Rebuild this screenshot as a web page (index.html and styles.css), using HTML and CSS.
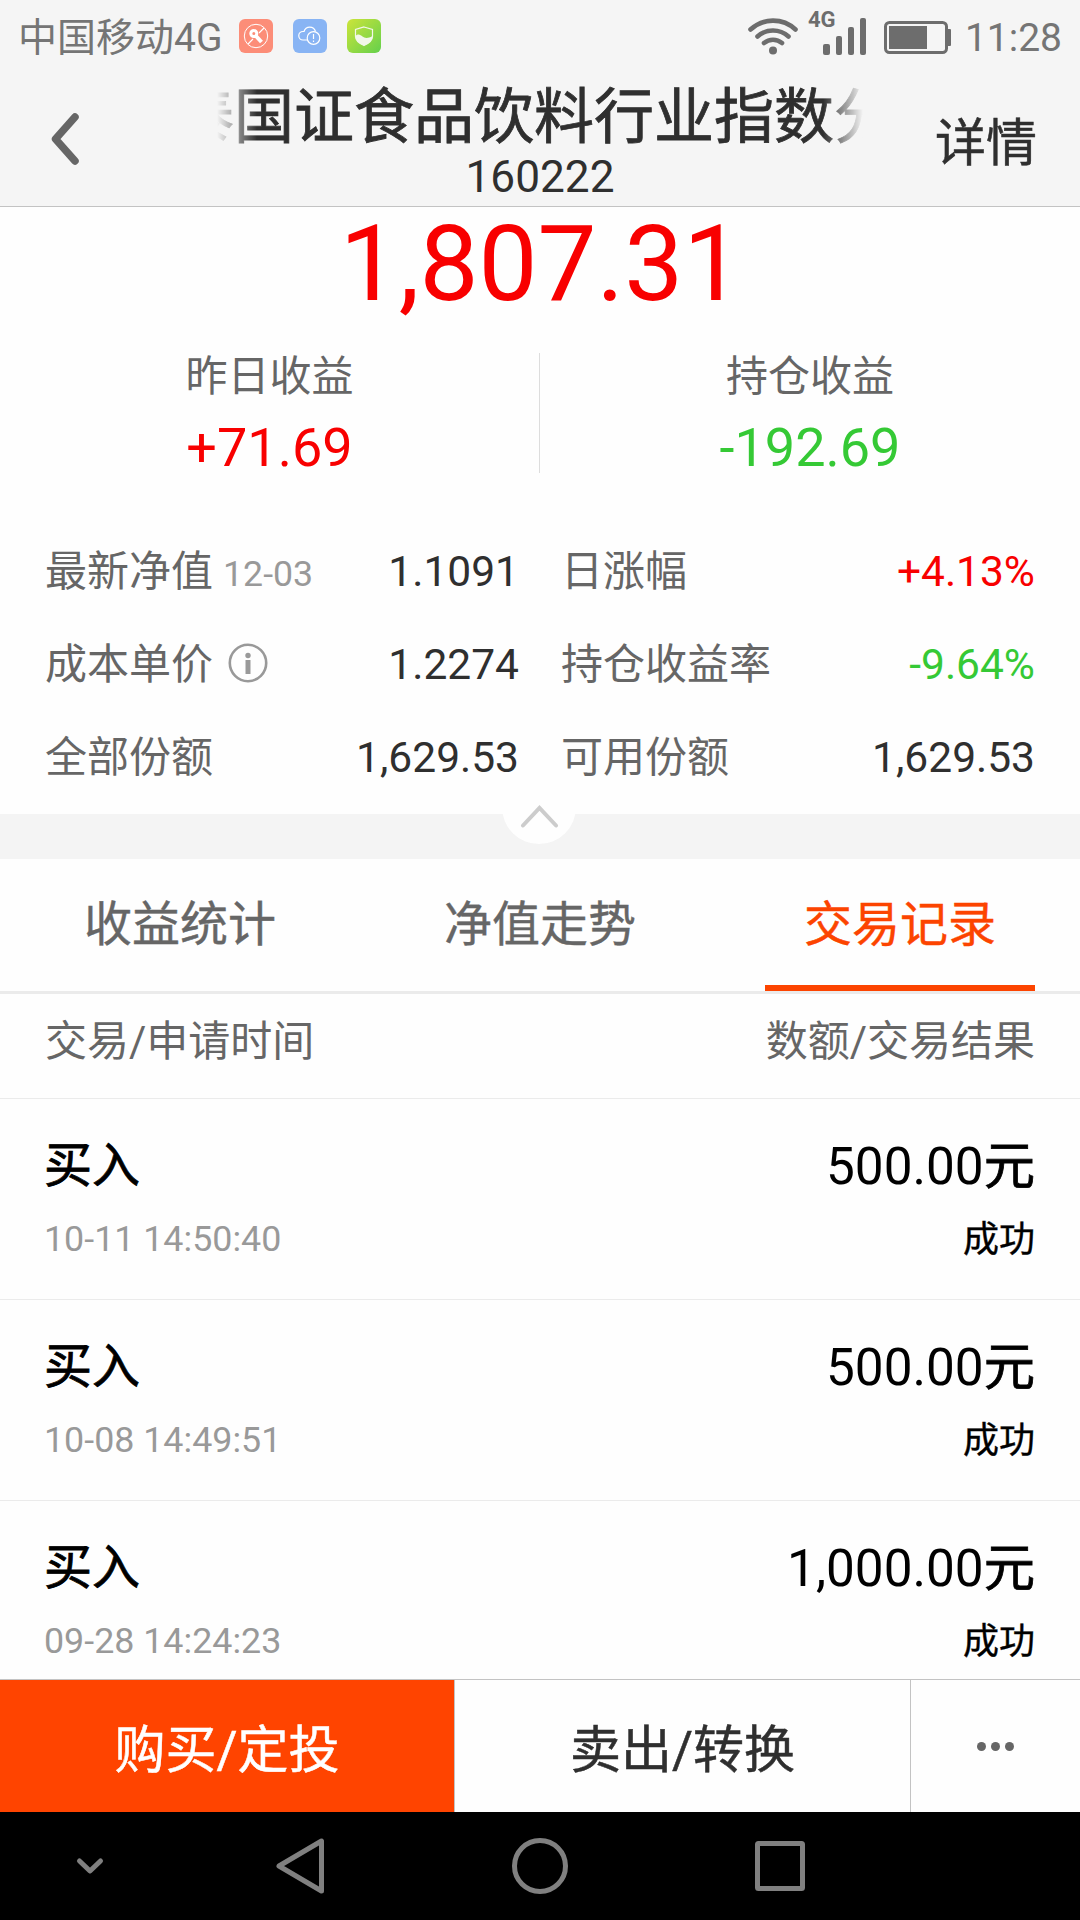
FILE: index.html
```
<!DOCTYPE html>
<html lang="zh-CN">
<head>
  <meta charset="UTF-8" />
  <meta name="viewport" content="width=device-width, initial-scale=1.0"/>
  <title>国泰国证食品饮料行业指数分级</title>
  <link rel="stylesheet" href="styles.css">
</head>
<body>
  <!-- Status bar -->
  <div class="status">
    <span class="carrier">中国移动4G</span>
    <svg class="app-icon" width="34" height="34" viewBox="0 0 34 34">
      <rect width="34" height="34" rx="6" fill="#fc8d78"/>
      <g fill="none" stroke="#fff">
        <circle cx="17" cy="17" r="11.7" stroke-width="1"/>
        <path d="M25 9l-5 5M14 20l-5 5" stroke-width="1.200"/>
        <path d="M16 16l6.500 7" stroke-width="4"/>
        <circle cx="14.800" cy="14.500" r="3" stroke-width="3"/>
      </g>
    </svg>
    <svg class="app-icon" width="34" height="34" viewBox="0 0 34 34">
      <rect width="34" height="34" rx="6" fill="#88b4f4"/>
      <g fill="none" stroke="#fff" stroke-width="1.200">
        <path d="M14 21H10a4 4 0 0 1 0-8.500h1a6 6 0 0 1 11.500 0"/>
        <circle cx="20.500" cy="19" r="6.300"/>
        <path d="M20.500 15v5M20.500 21.500v1.500"/>
      </g>
    </svg>
    <svg class="app-icon" width="34" height="34" viewBox="0 0 34 34">
      <defs>
        <linearGradient id="lime" x1="0" y1="0" x2="1" y2="1">
          <stop offset="0" stop-color="#cce43a"/>
          <stop offset="1" stop-color="#64d04c"/>
        </linearGradient>
      </defs>
      <rect width="34" height="34" rx="6" fill="url(#lime)"/>
      <path d="M17 8l8.500 2.500v7c0 4-4 7-8.500 9-4.500-2-8.500-5-8.500-9v-7z" fill="none" stroke="#f2f7ea" stroke-width="1.200"/>
      <path d="M8.500 17c3-3 5-1 7 .5s5 2.500 10-.5c0 5-4 7.500-8.500 9.500-4.500-2-8.500-4.500-8.500-9.500z" fill="#f2f7ea"/>
    </svg>
    <div class="status-right">
      <svg class="wifi" width="50" height="38" viewBox="0 0 50 38">
        <g fill="none" stroke="#6d6d6d" stroke-width="4.600" stroke-linecap="round">
          <path d="M2.500 12.500a33 33 0 0 1 45 0"/>
          <path d="M9.500 19.500a23 23 0 0 1 31 0"/>
          <path d="M16 26a14 14 0 0 1 18 0"/>
        </g>
        <circle cx="25" cy="33.500" r="4" fill="#6d6d6d"/>
      </svg>
      <div class="network">
        <span class="network-type">4G</span>
        <svg width="44" height="38" viewBox="0 0 44 38" fill="#6d6d6d">
          <rect x="0" y="26" width="7" height="11" rx="2"/>
          <rect x="13" y="18" width="6" height="19" rx="2"/>
          <rect x="25" y="9" width="6" height="28" rx="2"/>
          <rect x="37" y="0" width="6" height="37" rx="2"/>
        </svg>
      </div>
      <svg class="battery" width="68" height="34" viewBox="0 0 68 34">
        <rect x="1.500" y="1.500" width="61" height="30" rx="4" fill="none" stroke="#6d6d6d" stroke-width="3"/>
        <rect x="5" y="5" width="38" height="23" fill="#6d6d6d"/>
        <rect x="63" y="8" width="4" height="17" rx="1" fill="#6d6d6d"/>
      </svg>
      <span class="clock">11:28</span>
    </div>
  </div>

  <!-- Title bar -->
  <header>
    <svg class="back" width="28" height="52" viewBox="0 0 28 52">
      <path d="M24 4L4.500 26l19.500 22" fill="none" stroke="#666" stroke-width="7.500" stroke-linecap="round" stroke-linejoin="round"/>
    </svg>
    <div class="title">
      <h1><span>泰国证食品饮料行业指数分</span></h1>
      <p>160222</p>
    </div>
    <a class="detail">详情</a>
  </header>

  <main>
    <section class="summary">
      <div class="total">1,807.31</div>
      <div class="profits">
        <div class="profit">
          <span>昨日收益</span>
          <b class="up">+71.69</b>
        </div>
        <div class="profit">
          <span>持仓收益</span>
          <b class="down">-192.69</b>
        </div>
      </div>
      <div class="facts">
        <div class="fact"><span>最新净值</span><small>12-03</small><b>1.1091</b></div>
        <div class="fact"><span>日涨幅</span><b class="up">+4.13%</b></div>
        <div class="fact">
          <span>成本单价</span>
          <svg class="info" width="40" height="40" viewBox="0 0 40 40">
            <circle cx="20" cy="20" r="18.200" fill="none" stroke="#999" stroke-width="2.600"/>
            <circle cx="20" cy="12.500" r="2.700" fill="#999"/>
            <rect x="17.500" y="17" width="5" height="14" fill="#999"/>
          </svg>
          <b>1.2274</b>
        </div>
        <div class="fact"><span>持仓收益率</span><b class="down">-9.64%</b></div>
        <div class="fact"><span>全部份额</span><b>1,629.53</b></div>
        <div class="fact"><span>可用份额</span><b>1,629.53</b></div>
      </div>
    </section>

    <div class="divider">
      <div class="collapse">
        <svg width="40" height="24" viewBox="0 0 40 24">
          <path d="M3 21.500L19.500 4l16.500 17.500" fill="none" stroke="#ccc" stroke-width="4" stroke-linecap="round"/>
        </svg>
      </div>
    </div>

    <nav class="tabs">
      <a class="tab">收益统计</a>
      <a class="tab">净值走势</a>
      <a class="tab active">交易记录</a>
    </nav>

    <section class="records">
      <div class="records-head"><span>交易/申请时间</span><span>数额/交易结果</span></div>
      <div class="record">
        <div class="line"><span class="kind">买入</span><span class="amount">500.00<em>元</em></span></div>
        <div class="line sub"><time>10-11 14:50:40</time><span>成功</span></div>
      </div>
      <div class="record">
        <div class="line"><span class="kind">买入</span><span class="amount">500.00<em>元</em></span></div>
        <div class="line sub"><time>10-08 14:49:51</time><span>成功</span></div>
      </div>
      <div class="record">
        <div class="line"><span class="kind">买入</span><span class="amount">1,000.00<em>元</em></span></div>
        <div class="line sub"><time>09-28 14:24:23</time><span>成功</span></div>
      </div>
    </section>
  </main>

  <!-- Bottom actions -->
  <footer>
    <a class="buy">购买/定投</a>
    <a class="sell">卖出/转换</a>
    <a class="more"><i></i><i></i><i></i></a>
  </footer>

  <!-- Android navigation keys -->
  <div class="keys">
    <svg width="1080" height="108" viewBox="0 0 1080 108" fill="none" stroke="#808080" stroke-width="5" stroke-linejoin="round" stroke-linecap="round">
      <path d="M79.500 49L90 59l10.500-10"/>
      <path d="M279 54l42.500-25v50z"/>
      <circle cx="540" cy="54" r="25.500"/>
      <rect x="757.500" y="31.500" width="45" height="45" rx="1"/>
    </svg>
  </div>
</body>
</html>
```
FILE: styles.css
```
/* Reset & base */
* { box-sizing: border-box; margin: 0; padding: 0; }
html, body { height: 100%; overflow: hidden; }
body {
  display: flex;
  flex-direction: column;
  width: 1080px;
  height: 1920px;
  font-family: Roboto, 'Noto Sans CJK SC', sans-serif;
  font-size: 42px;
  background: #fefefe;
  color: #2f2f2f;
}
svg { display: block; flex: none; }
b { font-weight: 400; }
em { font-style: normal; }
.up { color: #f80000; }
.down { color: #35c935; }

/* Status bar */
.status {
  display: flex;
  height: 72px;
  padding: 0 18px;
  background: #f5f5f5;
  color: #757575;
  font-size: 39px;
}
.carrier { width: 203px; line-height: 77px; white-space: nowrap; }
.app-icon { margin: 19px 20px 0 0; }
.status .carrier { margin-right: 18px; }
.status-right {
  display: flex;
  margin-left: auto;
}
.wifi { margin-top: 17px; }
.network {
  display: flex;
  margin-left: 10px;
}
.network svg { margin-top: 18px; }
.network-type {
  width: 15px;
  line-height: 40px;
  font-size: 22px;
  font-weight: 700;
  color: #6d6d6d;
}
.battery { margin: 21px 0 0 17px; }
.clock { margin-left: 13px; line-height: 76px; }

/* Title bar */
header {
  display: flex;
  height: 135px;
  background: #f5f5f5;
  border-bottom: 1px solid #c3c3c3;
}
.back { margin: 41px 0 0 51px; }
.title {
  width: 646px;
  margin-left: 138px;
  text-align: center;
}
.title h1 {
  height: 79px;
  overflow: hidden;
  font-size: 60px;
  font-weight: 400;
  line-height: 92px;
  text-align: left;
  white-space: nowrap;
  -webkit-text-stroke: 0.8px;
  -webkit-mask-image: linear-gradient(to right, transparent, #000 40px, #000 606px, transparent);
  mask-image: linear-gradient(to right, transparent, #000 40px, #000 606px, transparent);
}
.title h1 span { margin-left: -43px; }
.title p { font-size: 44.200px; line-height: 53px; }
.detail {
  margin-left: 72px;
  font-size: 51px;
  line-height: 143px;
  -webkit-text-stroke: 0.5px;
}

/* Holding summary */
.summary { height: 607px; }
.total {
  height: 146px;
  padding-left: 2px;
  font-size: 105px;
  line-height: 116px;
  text-align: center;
  color: #f80000;
}
.profits { display: flex; }
.profit {
  width: 539px;
  height: 120px;
  text-align: center;
  color: #666;
}
.profit + .profit { width: 541px; border-left: 1px solid #ddd; }
.profit span { display: block; line-height: 48px; }
.profit b { display: block; font-size: 54px; line-height: 94px; }
.facts {
  display: grid;
  grid-template-columns: 474px 474px;
  grid-auto-rows: 93px;
  column-gap: 42px;
  padding: 53px 45px 0;
}
.fact {
  display: flex;
  align-items: baseline;
  line-height: 92px;
}
.fact span { color: #666; }
.fact small { margin-left: 10px; font-size: 35.700px; color: #999; }
.fact b { margin-left: auto; font-size: 42.500px; }
.info { align-self: flex-start; margin: 24px 0 0 15px; }

/* Gray strip with the collapse handle */
.divider {
  position: relative;
  height: 45px;
  background: #f4f4f4;
}
.collapse {
  position: absolute;
  top: -44px;
  left: 502px;
  width: 74px;
  height: 74px;
  padding: 34px 17px 0 18px;
  border-radius: 50%;
  background: #fefefe;
}

/* Tabs */
.tabs {
  display: flex;
  height: 135px;
  border-bottom: 3px solid #ebebeb;
}
.tab {
  width: 270px;
  margin: 0 45px;
  font-size: 48px;
  line-height: 132px;
  text-align: center;
  color: #666;
  -webkit-text-stroke: 0.4px;
}
.tab.active { color: #fc4400; border-bottom: 6px solid #fc4400; }

/* Trade records */
.records { height: 685px; overflow: hidden; color: #000; }
.records-head {
  display: flex;
  justify-content: space-between;
  height: 105px;
  padding: 0 45px;
  line-height: 95px;
  color: #666;
  border-bottom: 1px solid #ebebeb;
}
.record {
  height: 201px;
  padding: 30px 45px 0 44px;
  border-bottom: 1px solid #ebebeb;
}
.line {
  display: flex;
  justify-content: space-between;
  height: 76px;
  line-height: 76px;
}
.kind { font-size: 48px; line-height: 74px; -webkit-text-stroke: 0.8px; }
.amount { font-size: 51.300px; }
.amount em { -webkit-text-stroke: 0.8px; }
.sub { font-size: 36px; line-height: 70px; }
.sub time { font-size: 35.800px; line-height: 68px; color: #999; }
.sub span { -webkit-text-stroke: 0.4px; }

/* Bottom actions */
footer {
  display: flex;
  height: 133px;
  border-top: 1px solid #c3c3c3;
  font-size: 51px;
  line-height: 142px;
  text-align: center;
  -webkit-text-stroke: 0.5px;
}
.buy { width: 454px; background: #ff4400; color: #fff; }
.sell { width: 457px; border: solid #c3c3c3; border-width: 0 1px; }
.more {
  display: flex;
  flex: 1;
  align-items: center;
  justify-content: center;
  gap: 5px;
}
.more i { width: 9px; height: 9px; border-radius: 50%; background: #666; }

/* Navigation keys */
.keys { height: 108px; background: #000; }
```
